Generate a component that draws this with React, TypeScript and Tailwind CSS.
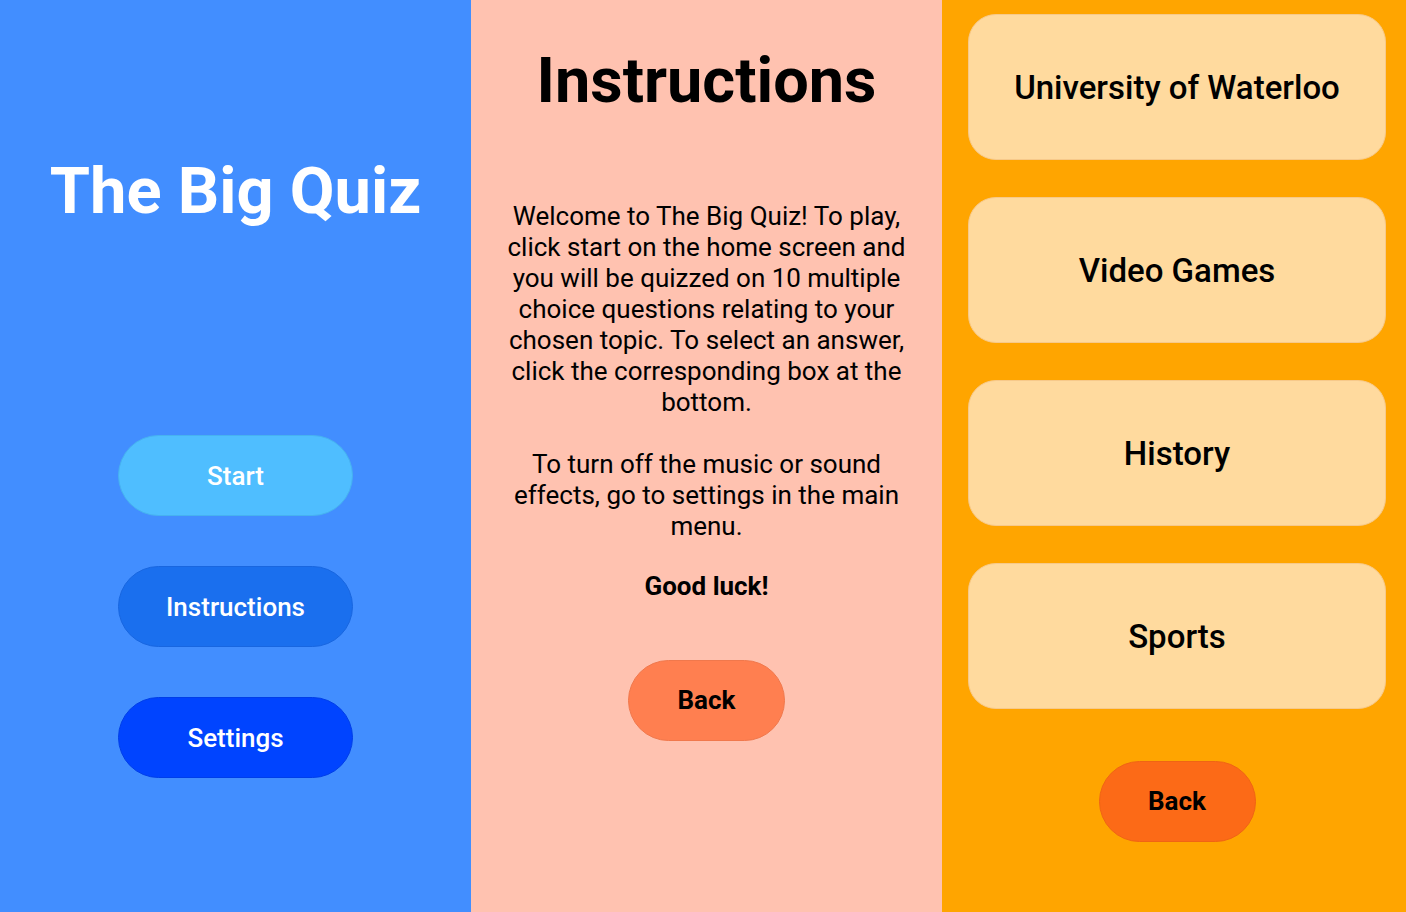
const topics = ["University of Waterloo", "Video Games", "History", "Sports"];

const font = { fontFamily: "Roboto, 'Noto Sans', sans-serif" };

export default function App() {
  return (
    <div className="flex h-[912px] w-[1406px] overflow-hidden" style={font}>
      {/* Home screen */}
      <div className="flex w-[471px] shrink-0 flex-col items-center bg-[#428eff]">
        <h1 className="mt-[159px] text-[65px] font-bold leading-none text-white">The Big Quiz</h1>
        <div className="mt-[211px] flex flex-col gap-[50px]">
          <button className="h-[81px] w-[235px] rounded-full border border-[#46b2f0] bg-[#4fbeff] pt-[2px] text-[26px] font-medium text-white">
            Start
          </button>
          <button className="h-[81px] w-[235px] rounded-full border border-[#1866e0] bg-[#1a6fee] pt-[2px] text-[26px] font-medium text-white">
            Instructions
          </button>
          <button className="h-[81px] w-[235px] rounded-full border border-[#003ee8] bg-[#0044ff] pt-[2px] text-[26px] font-medium text-white">
            Settings
          </button>
        </div>
      </div>

      {/* Instructions screen */}
      <div className="flex w-[471px] shrink-0 flex-col items-center bg-[#ffc2b0]">
        <h2 className="mt-[49px] text-[63px] font-bold leading-none text-black">Instructions</h2>
        <div className="mt-[89px] w-[410px] text-center text-[26px] leading-[31px] text-black">
          <p>
            Welcome to The Big Quiz! To play, click start on the home screen and you will be quizzed on 10 multiple
            choice questions relating to your chosen topic. To select an answer, click the corresponding box at the
            bottom.
          </p>
          <p className="mt-[31px]">
            To turn off the music or sound effects, go to settings in the main menu.
          </p>
          <p className="mt-[29px] font-bold">Good luck!</p>
        </div>
        <button className="mt-[58px] h-[81px] w-[157px] rounded-full border border-[#f0784c] bg-[#ff7f50] text-[26px] font-bold text-black">
          Back
        </button>
      </div>

      {/* Topic select screen */}
      <div className="flex flex-1 flex-col bg-[#ffa500] pl-[26px] pr-[20px] pt-[14px]">
        <div className="flex flex-col gap-[37px]">
          {topics.map((t) => (
            <button
              key={t}
              className="h-[146px] w-full rounded-[28px] border border-[#f7c98a] bg-[#ffda9e] pt-[2px] text-[33px] font-medium text-black"
            >
              {t}
            </button>
          ))}
        </div>
        <button className="mx-auto mt-[52px] h-[81px] w-[157px] rounded-full border border-[#f06414] bg-[#fc6a17] text-[26px] font-bold text-black">
          Back
        </button>
      </div>
    </div>
  );
}
